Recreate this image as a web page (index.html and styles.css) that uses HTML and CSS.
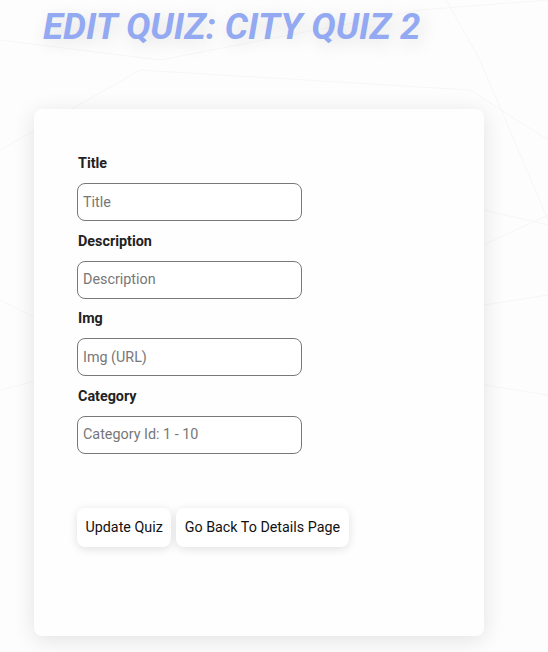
FILE: index.html
```html
<!DOCTYPE html>
<html lang="en">
<head>
<meta charset="utf-8">
<title>Edit Quiz</title>
<link rel="stylesheet" href="styles.css">
</head>
<body>
<svg class="bg-lines" width="548" height="652" viewBox="0 0 548 652" aria-hidden="true">
  <g stroke="#f6f6f8" stroke-width="1" fill="none">
    <path d="M0 40 L160 60 L420 10 L548 0"/>
    <path d="M0 150 L140 70 L470 90 L548 140"/>
    <path d="M446 0 L480 60 L548 220"/>
    <path d="M0 300 L40 320 L300 330 L548 215"/>
    <path d="M484 210 L548 225"/>
    <path d="M484 305 L548 295"/>
    <path d="M0 390 L40 380"/>
    <path d="M484 385 L548 395"/>
  </g>
</svg>
<main class="page">
  <h1 class="title">EDIT QUIZ: CITY QUIZ 2</h1>
  <section class="card">
    <form class="form">
      <div class="field">
        <label class="label" for="title">Title</label>
        <input class="input" id="title" type="text" placeholder="Title">
      </div>
      <div class="field">
        <label class="label" for="desc">Description</label>
        <input class="input" id="desc" type="text" placeholder="Description">
      </div>
      <div class="field">
        <label class="label" for="img">Img</label>
        <input class="input" id="img" type="text" placeholder="Img (URL)">
      </div>
      <div class="field">
        <label class="label" for="cat">Category</label>
        <input class="input" id="cat" type="text" placeholder="Category Id: 1 - 10">
      </div>
      <div class="actions">
        <button class="btn" type="button">Update Quiz</button>
        <button class="btn" type="button">Go Back To Details Page</button>
      </div>
    </form>
  </section>
</main>
</body>
</html>
```
FILE: styles.css
```css
* { box-sizing: border-box; }
html, body {
  margin: 0;
  padding: 0;
  background: #fdfdfd;
  font-family: Roboto, "Liberation Sans", Arial, sans-serif;
}
body {
  position: relative;
  width: 548px;
  height: 652px;
  overflow: hidden;
}
.bg-lines {
  position: absolute;
  left: 0;
  top: 0;
  z-index: 0;
}
.page {
  position: relative;
  z-index: 1;
  padding-top: 5px;
}
.title {
  margin: 0 0 0 43px;
  font-size: 36.6px;
  font-weight: 700;
  font-style: italic;
  line-height: normal;
  color: #93a9f1;
  text-shadow: 3px 4px 18px rgba(0, 0, 0, 0.13);
  letter-spacing: 0;
}
.card {
  margin: 61px 0 0 34px;
  width: 450px;
  height: 527px;
  background: #fefefe;
  border-radius: 8px;
  box-shadow: 0 4px 22px rgba(0, 0, 0, 0.11);
  padding: 46px 0 0 43px;
}
.field {
  margin-bottom: 11.5px;
}
.label {
  display: block;
  font-size: 14.35px;
  font-weight: 700;
  line-height: 18px;
  color: #222;
  margin: 0 0 10px 1px;
}
.input {
  display: block;
  width: 225px;
  height: 38px;
  border: 1px solid #787878;
  border-radius: 8px;
  padding: 0 5px;
  font-family: Roboto, "Liberation Sans", Arial, sans-serif;
  font-size: 14.35px;
  color: #222;
  background: #fff;
}
.input::placeholder {
  color: #777;
}
.actions {
  display: flex;
  gap: 5px;
  margin-top: 54px;
}
.btn {
  height: 39px;
  padding: 0 8.5px;
  border: none;
  border-radius: 8px;
  background: #fff;
  box-shadow: 0 2px 10px rgba(0, 0, 0, 0.12);
  font-family: Roboto, "Liberation Sans", Arial, sans-serif;
  font-size: 14.3px;
  color: #111;
}
```
